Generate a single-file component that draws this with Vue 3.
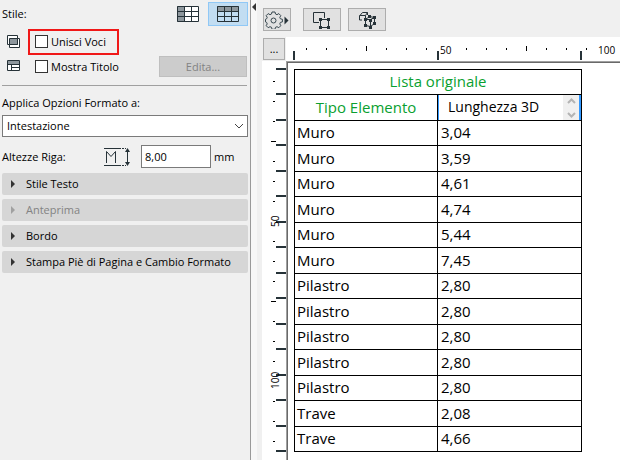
<script setup>
import { ref } from 'vue'

const merge = ref(false)
const showTitle = ref(false)
const target = ref('Intestazione')
const rowHeight = ref('8,00')

const sections = [
  { label: 'Stile Testo' },
  { label: 'Anteprima', disabled: true },
  { label: 'Bordo' },
  { label: 'Stampa Piè di Pagina e Cambio Formato' },
]

const rows = [
  ['Muro', '3,04'],
  ['Muro', '3,59'],
  ['Muro', '4,61'],
  ['Muro', '4,74'],
  ['Muro', '5,44'],
  ['Muro', '7,45'],
  ['Pilastro', '2,80'],
  ['Pilastro', '2,80'],
  ['Pilastro', '2,80'],
  ['Pilastro', '2,80'],
  ['Pilastro', '2,80'],
  ['Trave', '2,08'],
  ['Trave', '4,66'],
]

// Ruler graduations: one every 20px, a longer one midway between numbers.
const hTicks = Array.from({ length: 15 }, (_, i) => ({ x: 20 + i * 20, long: i % 8 === 3 })).filter((t) => t.x !== 160)
const hStops = [7, 151, 294]
const vTicks = Array.from({ length: 19 }, (_, i) => ({ y: 20 + i * 20, long: i % 8 === 3 })).filter(
  (t) => t.y !== 160 && t.y !== 320
)
const vStops = Array.from({ length: 16 }, (_, i) => 7 + Math.floor((i * 51) / 2))
</script>

<template>
  <div class="app">
    <aside class="side">
      <div class="style-row">
        <span>Stile:</span>
        <div class="modes">
          <button class="mode" aria-label="Intestazione a sinistra">
            <svg width="22" height="16" viewBox="0 0 22 16">
              <path d="M0 0h7v16H0z" fill="#8e979d" />
              <path d="M7 0h15v16H7z" fill="#fff" />
              <path d="M.5 .5h21v15H.5zM7.5 0v16M14.5 0v16M0 5.5h22M0 10.5h22" fill="none" stroke="#263238" />
            </svg>
          </button>
          <button class="mode on" aria-label="Intestazione in alto">
            <svg width="22" height="16" viewBox="0 0 22 16">
              <path d="M0 0h22v5H0z" fill="#8e979d" />
              <path d="M.5 .5h21v15H.5zM7.5 0v16M14.5 0v16M0 5.5h22M0 10.5h22" fill="none" stroke="#263238" />
            </svg>
          </button>
        </div>
      </div>

      <div class="opt first">
        <svg width="14" height="14" viewBox="0 0 14 14">
          <path d="M2.500 3.500h10v9h-10z" fill="#fff" stroke="#263238" />
          <path d="M.5 .5h10v9H.5z" fill="#fff" stroke="#263238" />
          <path d="M2.500 3.500h8v6h-8z" fill="#8e979d" stroke="#263238" />
        </svg>
        <label class="tick marked"><input v-model="merge" type="checkbox" />Unisci Voci</label>
      </div>
      <div class="opt">
        <svg width="14" height="14" viewBox="0 0 14 14">
          <path d="M.5 .5h12v10H.5z" fill="#fff" stroke="#263238" />
          <path d="M1 1h11v3H1z" fill="#8e979d" />
          <path d="M0 4.500h13M4.500 4v7M4 7.500h9" fill="none" stroke="#263238" />
        </svg>
        <label class="tick"><input v-model="showTitle" type="checkbox" />Mostra Titolo</label>
        <button class="edit" disabled>Edita...</button>
      </div>

      <hr />

      <label class="apply" for="target">Applica Opzioni Formato a:</label>
      <div class="select">
        <select id="target" v-model="target">
          <option>Intestazione</option>
        </select>
        <svg width="10" height="6" viewBox="0 0 10 6">
          <path d="M1 1l4 4 4-4" fill="none" stroke="#444" />
        </svg>
      </div>

      <div class="height-row">
        <label for="rh">Altezze Riga:</label>
        <svg width="27" height="20" viewBox="0 0 27 20">
          <path d="M0 1.500h15M0 18.500h15" stroke="#263238" />
          <path d="M15 1.500h7M15 18.500h7" stroke="#263238" stroke-dasharray="2 1" />
          <path d="M2.500 16V4.500l4.500 5 4.500-5V16" fill="none" stroke="#263238" />
          <path d="M23.500 3v14" stroke="#263238" />
          <path d="M21 5L23.500 1 26 5zM21 15l2.500 4 2.500-4z" fill="#263238" />
        </svg>
        <input id="rh" v-model="rowHeight" type="text" />
        <span>mm</span>
      </div>

      <div class="sections">
        <button v-for="s in sections" :key="s.label" class="section" :disabled="s.disabled">
          <svg width="4" height="8" viewBox="0 0 4 8"><path d="M0 0l4 4-4 4z" fill="currentColor" /></svg>
          {{ s.label }}
        </button>
      </div>
    </aside>

    <button class="splitter" aria-label="Chiudi pannello">
      <svg width="4" height="8" viewBox="0 0 4 8"><path d="M4 0v8L0 4z" fill="#333" /></svg>
    </button>

    <main class="main">
      <div class="toolbar">
        <button class="tool gear" aria-label="Impostazioni">
          <svg width="24" height="18" viewBox="0 0 24 18">
            <path
              d="M7 1h3l.5 2 1.500.7 1.800-1.100 2 2-1 1.800.6 1.400 2 .5v2.600l-2 .5-.6 1.500 1 1.800-2 2-1.800-1-1.500.6-.5 2H7l-.5-2-1.500-.6-1.800 1-2-2 1-1.800-.6-1.500-1.100-.5V8.300l1.100-.5.6-1.400-1-1.800 2-2L5 3.700 6.500 3z"
              fill="none" stroke="#37474f" stroke-linejoin="round"
            />
            <circle cx="8.500" cy="9.500" r="2.500" fill="none" stroke="#37474f" />
            <path d="M19.500 5.500l4 4-4 4z" fill="#263238" />
          </svg>
        </button>
        <button class="tool" aria-label="Seleziona in pianta">
          <svg width="18" height="18" viewBox="0 0 18 18">
            <path d="M6 11.500H.5V1.500h11V7M7.500 8.500h8v8h-8z" fill="none" stroke="#263238" />
            <path d="M6 7h3v3H6zM14 7h3v3h-3zM6 15h3v3H6zM14 15h3v3h-3z" fill="#263238" />
          </svg>
        </button>
        <button class="tool" aria-label="Seleziona in 3D">
          <svg width="18" height="18" viewBox="0 0 18 18">
            <path d="M1.500 9V5l3-3.500h5L7.500 4.500h-6M4 9H1.500M7.500 4.500V7M9.500 1.500V4M7.500 8.500h5v7l-5-1zM12.500 8.500l4-2v6l-4 3M7.500 8.500l4-3 5 1" fill="none" stroke="#263238" />
            <path d="M6 7h3v3H6zM11 8h3v3h-3zM15 5h3v3h-3zM6 13h3v3H6zM11 15h3v3h-3zM15 11h3v3h-3zM10 4h3v3h-3z" fill="#263238" />
          </svg>
        </button>
      </div>

      <div class="work">
        <div class="corner"><button>...</button></div>
        <div class="ruler-h">
          <svg width="334" height="24">
            <rect v-for="t in hTicks" :key="t.x" :x="t.x" :y="t.long ? 9 : 11" width="1" :height="t.long ? 5 : 2" />
            <rect v-for="x in hStops" :key="'s' + x" class="stop" :x="x" y="14" width="2" height="9" />
            <text x="154" y="17">50</text>
            <text x="312" y="17">100</text>
          </svg>
        </div>
        <div class="ruler-v">
          <svg width="24" height="398">
            <rect v-for="t in vTicks" :key="t.y" :x="t.long ? 9 : 11" :y="t.y" :width="t.long ? 5 : 2" height="1" />
            <rect v-for="y in vStops" :key="'s' + y" class="stop" x="14" :y="y" width="10" height="2" />
            <text transform="translate(17 166) rotate(-90)">50</text>
            <text transform="translate(17 328) rotate(-90)">100</text>
          </svg>
        </div>
        <div class="sheet">
          <table>
            <colgroup><col class="type" /><col /></colgroup>
            <thead>
              <tr><th colspan="2">Lista originale</th></tr>
              <tr>
                <th>Tipo Elemento</th>
                <th class="editing">
                  <div class="field">
                    <input type="text" value="Lunghezza 3D" aria-label="Titolo colonna" />
                    <span class="spin">
                      <svg width="9" height="20" viewBox="0 0 9 20">
                        <path d="M1 5l3.500-3.500L8 5M1 15l3.500 3.500L8 15" fill="none" stroke="#b4b4b4" stroke-width="2" />
                      </svg>
                    </span>
                  </div>
                </th>
              </tr>
            </thead>
            <tbody>
              <tr v-for="(r, i) in rows" :key="i">
                <td>{{ r[0] }}</td>
                <td>{{ r[1] }}</td>
              </tr>
            </tbody>
          </table>
        </div>
      </div>
    </main>
  </div>
</template>

<style>
body {
  background: #f0f0f0;
}
</style>

<style scoped>
.app {
  display: flex;
  min-height: 100vh;
  font: 11px/16px "Open Sans", "Noto Sans", sans-serif;
  color: #000;
  background: #f0f0f0;
}
.app * {
  box-sizing: border-box;
}
button,
input,
select {
  font: inherit;
  color: inherit;
  margin: 0;
  padding: 0;
  border-radius: 0;
}
svg {
  display: block;
  flex: none;
}
.side {
  flex: none;
  width: 251px;
  padding: 2px 2px 0;
  border-right: 1px solid #999;
  white-space: nowrap;
}
.style-row {
  display: flex;
  justify-content: space-between;
  align-items: center;
  height: 24px;
}
.modes {
  display: flex;
}
.mode {
  display: grid;
  place-items: center;
  width: 40px;
  height: 24px;
  border: 1px solid transparent;
  background: none;
}
.mode.on {
  background: #c2ddf2;
  border-color: #90c8f6;
}
.opt {
  display: flex;
  align-items: center;
  height: 25px;
  padding: 0 1px 0 5px;
}
.opt.first {
  margin-top: 3px;
}
.tick {
  display: flex;
  align-items: center;
  gap: 3px;
  height: 26px;
  margin-left: 7px;
  padding: 0 11px 0 5px;
  border: 2px solid transparent;
}
.tick.marked {
  border-color: #f01818;
}
.tick input {
  appearance: none;
  width: 13px;
  height: 13px;
  border: 1px solid #333;
  background: #fff;
}
.edit {
  width: 88px;
  height: 21px;
  margin-left: auto;
  border: 1px solid #bfbfbf;
  background: #ccc;
  color: #838383;
}
hr {
  height: 1px;
  margin: 6px 1px 9px 0;
  border: 0;
  background: #a0a0a0;
}
.apply {
  display: block;
  height: 20px;
}
.select {
  display: grid;
  align-items: center;
}
.select > * {
  grid-area: 1 / 1;
}
.select svg {
  justify-self: end;
  margin-right: 4px;
  pointer-events: none;
}
select {
  appearance: none;
  width: 100%;
  height: 22px;
  padding: 0 4px;
  border: 1px solid #7a7a7a;
  background: #fff;
}
.height-row {
  display: flex;
  align-items: center;
  height: 36px;
  padding-top: 3px;
}
.height-row label {
  width: 102px;
}
.height-row input {
  width: 70px;
  height: 23px;
  margin: 0 3px 0 10px;
  padding: 0 3px;
  border: 1px solid #7a7a7a;
  background: #fff;
}
.sections {
  display: grid;
  gap: 4px;
}
.section {
  display: flex;
  align-items: center;
  gap: 11px;
  height: 22px;
  padding: 0 9px;
  border: 0;
  border-radius: 2px;
  background: #d6d6d6;
}
.section svg {
  color: #333;
}
.section:disabled {
  color: #838383;
}
.section:disabled svg {
  color: #a0a0a0;
}
.splitter {
  display: flex;
  flex: none;
  width: 6px;
  padding: 3px 1px;
  border: 0;
  background: #f7f7f7;
}
.main {
  flex: 1;
  min-width: 0;
  display: flex;
  flex-direction: column;
}
.toolbar {
  display: flex;
  gap: 7px;
  height: 37px;
  padding: 8px 6px 0;
}
.tool {
  display: grid;
  place-items: center;
  width: 38px;
  height: 23px;
  border: 1px solid #adadad;
  background: #e1e1e1;
}
.gear {
  width: 28px;
  margin-right: 5px;
}
.work {
  flex: 1;
  display: grid;
  grid-template-columns: 24px 1fr;
  grid-template-rows: 24px 1fr;
  margin-left: 5px;
  background: #fff;
}
.corner {
  background: #f0f0f0;
}
.corner button {
  width: 22px;
  height: 22px;
  margin: 1px;
  border: 1px solid #adadad;
  background: #e1e1e1;
}
.ruler-h {
  overflow: hidden;
}
.ruler-h,
.ruler-v {
  fill: #000;
  font-size: 10px;
}
.stop {
  fill: #263238;
}
.sheet {
  padding: 7px;
  border-top: 1px solid #a0a0a0;
  border-left: 1px solid #a0a0a0;
  box-shadow: inset 1px 1px #696969;
}
table {
  table-layout: fixed;
  width: 288px;
  border-spacing: 0;
  border: 0 solid #000;
  border-width: 1px 0 0 1px;
  font: 15px/20px "Open Sans", "Noto Sans", sans-serif;
}
.type {
  width: 143px;
}
tr {
  height: 25px;
}
tr:nth-child(even) {
  height: 26px;
}
th,
td {
  padding: 0 2px 2px;
  border: 0 solid #000;
  border-width: 0 1px 1px 0;
  font-weight: 400;
  text-align: left;
}
td + td {
  padding-left: 3px;
}
th {
  color: #0a9f30;
  text-align: center;
}
.editing {
  padding: 0;
  color: #000;
}
.field {
  display: flex;
  height: 25px;
  border: 0 solid #3399ff;
  border-width: 0 2px 0 1px;
}
.field input {
  flex: 1;
  min-width: 0;
  padding: 0 0 2px 9px;
  border: 0;
  background: none;
  font-size: 14px;
}
.spin {
  display: grid;
  place-items: center;
  width: 16px;
  background: #f0f0f0;
}
</style>
